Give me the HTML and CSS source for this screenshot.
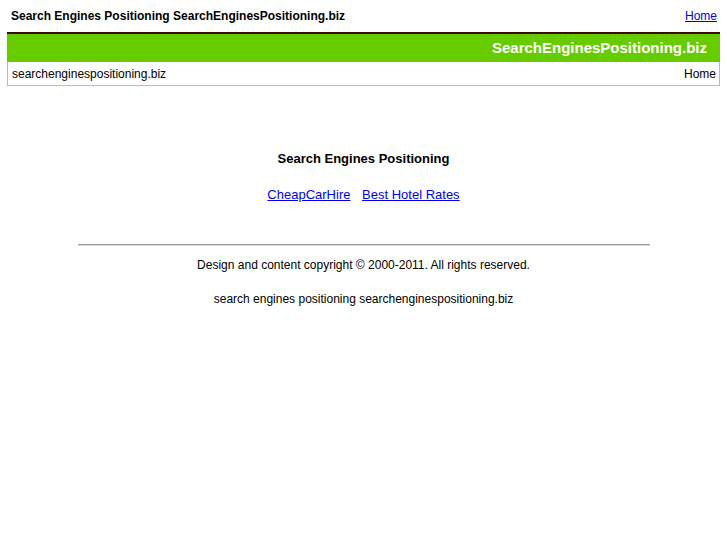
FILE: index.html
```html
<!DOCTYPE html>
<html>
<head>
<meta charset="utf-8">
<title>Search Engines Positioning</title>
<link rel="stylesheet" href="styles.css">
</head>
<body>
<div class="wrap">
  <div class="top">
    <h1 class="title">Search Engines Positioning SearchEnginesPositioning.biz</h1>
    <a class="toplink" href="#">Home</a>
  </div>
  <div class="band">SearchEnginesPositioning.biz</div>
  <div class="crumbs">
    <span>searchenginespositioning.biz</span>
    <span>Home</span>
  </div>
</div>
<div class="main">
  <h2 class="heading">Search Engines Positioning</h2>
  <p class="links"><a href="#">CheapCarHire</a> <a href="#">Best Hotel Rates</a></p>
  <hr class="rule">
  <p class="copy">Design and content copyright © 2000-2011. All rights reserved.</p>
  <p class="copy">search engines positioning searchenginespositioning.biz</p>
</div>
</body>
</html>
```
FILE: styles.css
```css
html, body {
  margin: 0;
  padding: 0;
  background: #fff;
  font-family: "Liberation Sans", Arial, sans-serif;
  color: #000;
}
.wrap {
  width: 713px;
  margin: 0 auto;
}
.top {
  height: 32px;
  display: flex;
  justify-content: space-between;
  align-items: center;
  padding: 0 3px 0 4px;
}
.title {
  margin: 0;
  font-size: 12px;
  font-weight: bold;
}
.toplink {
  font-size: 12px;
  color: #0000ee;
}
.band {
  border-top: 2px solid #3a0a00;
  background: #66cc00;
  height: 28px;
  line-height: 27px;
  text-align: right;
  padding-right: 13px;
  color: #fff;
  font-weight: bold;
  font-size: 15px;
}
.crumbs {
  border: 1px solid #99dd66;
  border-top: none;
  height: 23px;
  display: flex;
  justify-content: space-between;
  align-items: center;
  padding: 0 3px 0 4px;
  font-size: 12px;
}
.main {
  text-align: center;
  padding-top: 65px;
}
.heading {
  margin: 0;
  font-size: 13px;
  font-weight: bold;
  line-height: 15px;
}
.links {
  margin: 21px 0 0;
  font-size: 13px;
  line-height: 15px;
}
.links a {
  color: #0000ee;
  margin: 0 4px;
}
.rule {
  width: 572px;
  margin: 42px auto 0;
  border: none;
  border-top: 1px solid #999;
  border-bottom: 1px solid #ddd;
}
.copy {
  margin: 12px 0 0;
  font-size: 12px;
  line-height: 15px;
}
.copy + .copy {
  margin-top: 19px;
}
```
